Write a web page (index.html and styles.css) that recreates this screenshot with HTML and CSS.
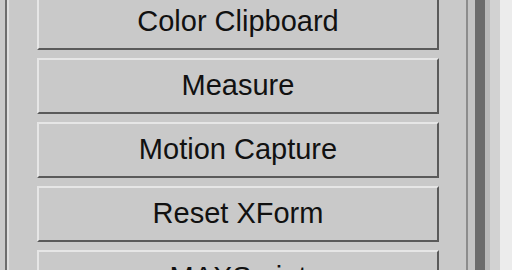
FILE: index.html
```html
<!DOCTYPE html>
<html lang="en">
  <head>
    <meta charset="UTF-8" />
    <meta name="viewport" content="width=device-width, initial-scale=1.0" />
    <title>Utilities</title>
    <link rel="stylesheet" href="styles.css">
  </head>
  <body>
    <div class="panel">
      <div class="edge-left">
        <span class="shade"></span>
        <span class="hilite"></span>
      </div>
      <div class="buttons">
        <div class="btn">Color Clipboard</div>
        <div class="btn">Measure</div>
        <div class="btn">Motion Capture</div>
        <div class="btn">Reset XForm</div>
        <div class="btn">MAXScript</div>
      </div>
      <div class="edge-right">
        <span class="rule"></span>
        <span class="track"></span>
        <span class="thumb"></span>
        <span class="groove"></span>
        <span class="light"></span>
        <span class="outer"></span>
      </div>
    </div>
  </body>
</html>
```

FILE: styles.css
```css
* {
  margin: 0;
  padding: 0;
  box-sizing: border-box;
}
body {
  width: 512px;
  height: 270px;
  overflow: hidden;
  background: #c9c9c9;
  font-family: "Liberation Sans", Arial, sans-serif;
}
.panel {
  display: flex;
  height: 270px;
}
.edge-left {
  display: flex;
  width: 37px;
  padding-left: 5px;
}
.edge-left span {
  display: block;
  height: 100%;
}
.shade {
  width: 2px;
  background: #6c6c6c;
}
.hilite {
  width: 2px;
  background: #dedede;
}
.buttons {
  display: flex;
  flex-direction: column;
  gap: 8px;
  width: 402px;
  margin-top: -6px;
}
.btn {
  display: flex;
  justify-content: center;
  align-items: center;
  flex: none;
  height: 56px;
  background: #c9c9c9;
  border: 2px solid;
  border-color: #e6e6e6 #5a5a5a #5a5a5a #e6e6e6;
  font-size: 29px;
  color: #111;
  padding-bottom: 1px;
}
.edge-right {
  display: flex;
  flex: 1;
}
.edge-right span {
  display: block;
  height: 100%;
}
.rule {
  width: 2px;
  margin-left: 27px;
  background: #8c8c8c;
}
.track {
  width: 7px;
  background: #c4c4c4;
}
.thumb {
  width: 10px;
  background: #6c6c6c;
}
.groove {
  width: 5px;
  background: #bababa;
}
.light {
  width: 10px;
  background: #d2d2d2;
}
.outer {
  flex: 1;
  background: #ececec;
}
```
